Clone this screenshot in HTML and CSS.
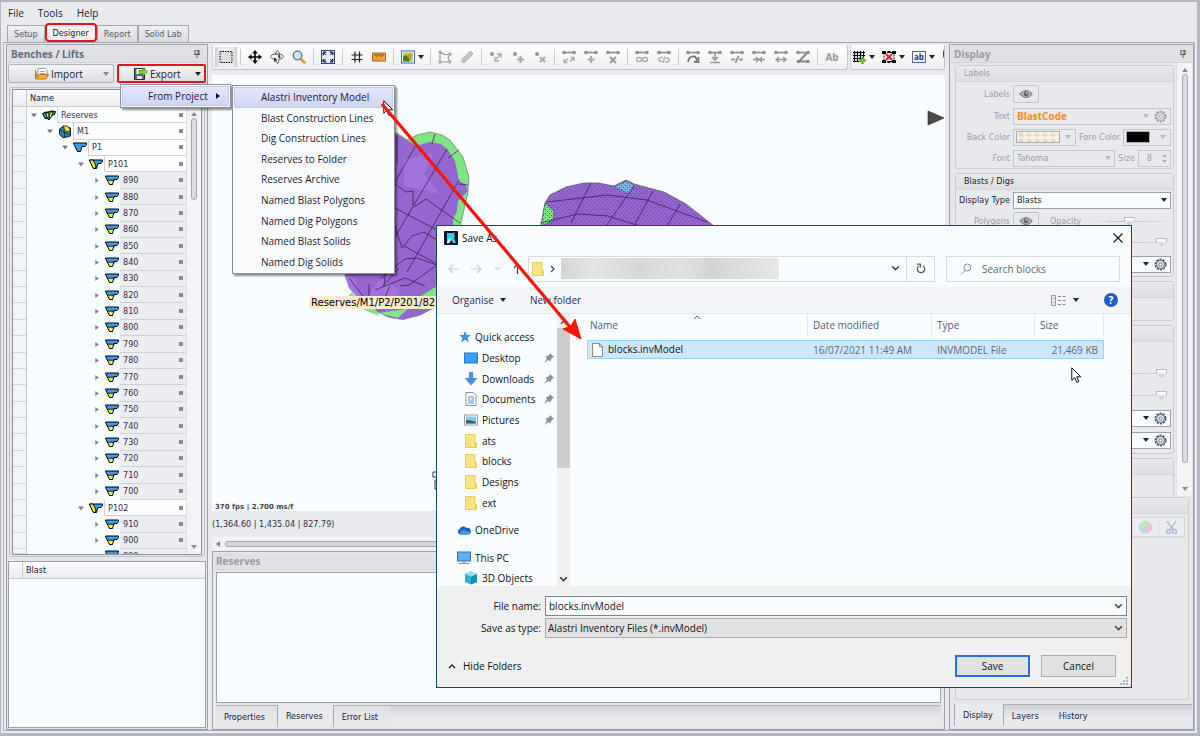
FILE: index.html
```html
<!DOCTYPE html>
<html lang="en">
<head>
<meta charset="utf-8">
<title>Designer</title>
<link rel="stylesheet" href="styles.css">
</head>
<body>
<svg class="sprite" aria-hidden="true">
  <symbol id="down" viewBox="0 0 6 4"><path d="M0 0h6L3 4z" fill="currentColor"/></symbol>
  <symbol id="right" viewBox="0 0 4 6"><path d="M0 0v6l4-3z" fill="currentColor"/></symbol>
  <symbol id="up" viewBox="0 0 6 4"><path d="M0 4h6L3 0z" fill="currentColor"/></symbol>
  <symbol id="chev" viewBox="0 0 8 6"><path d="M1 1l3 3 3-3" fill="none" stroke="currentColor" stroke-width="1.3"/></symbol>
  <symbol id="pin" viewBox="0 0 8 8"><path d="M2 0h4v4M2 0v4M5 0v4M1 4.5h6M4 5v3" fill="none" stroke="currentColor"/></symbol>
  <symbol id="bench" viewBox="0 0 14 10"><path d="M.5.500h13v1.500L12 4H9L7.500 9h-3L1 2z" fill="#3a9be8" stroke="#000"/><path d="M3 5h5L7 8.500H5z" fill="#fff01a"/><path d="M2.500 4.700h7" stroke="#000" stroke-width=".8"/></symbol>
  <symbol id="pit" viewBox="0 0 14 10"><path d="M.5.500h13v1.500L12 4H9L7.500 9h-3L1 2z" fill="#3a9be8" stroke="#000"/></symbol>
  <symbol id="stage" viewBox="0 0 14 10"><path d="M.5.500h13v1.500L12 4H9L7.500 9h-3L1 2z" fill="#3a9be8" stroke="#000"/><path d="M1 .500h3l3 6-1 2.500H4.500L1 2z" fill="#fff01a" stroke="#000" stroke-width=".9"/></symbol>
  <symbol id="reserves" viewBox="0 0 14 10"><path d="M.5 3L4 1.500 8 2l-3 6H3z" fill="#2e8fe0" stroke="#000"/><path d="M4 2.500l5-2L13.500 1l-1 3-3 1-2 4H6z" fill="#2e8fe0" stroke="#000"/><path d="M4 3l2-1 1 3-2 3zM8 2l3-1-2 6H7z" fill="#ffee10" stroke="#000" stroke-width=".7"/></symbol>
  <symbol id="model" viewBox="0 0 13 13"><path d="M1 4l4-3 3 1 4 1v8l-3 1-5 .5L1 9z" fill="#2e7fb8" stroke="#123" /><path d="M5 1l4 0 3 4-3 2-3-2z" fill="#ffe020" stroke="#222" stroke-width=".8"/><path d="M2 5l4 2v5M6 7l5 3" stroke="#0b3350" fill="none"/></symbol>
  <symbol id="gear" viewBox="0 0 14 14"><circle cx="7" cy="7" r="5.500" fill="none" stroke="currentColor" stroke-width="2" stroke-dasharray="2.300 1.150"/><circle cx="7" cy="7" r="4.300" fill="none" stroke="currentColor"/><circle cx="7" cy="7" r="1.800" fill="none" stroke="currentColor"/></symbol>
  <symbol id="eye" viewBox="0 0 14 10"><path d="M1 5q6-7 12 0q-6 7-12 0z" fill="#c4c4c6" stroke="#8a8a8a" stroke-width="1.200"/><circle cx="7" cy="4.800" r="2.500" fill="#666"/><circle cx="7.500" cy="4" r=".8" fill="#fff"/></symbol>
  <symbol id="folder" viewBox="0 0 12 14"><path d="M.5.500h9.500v8h1.500v5H.5z" fill="#f8e387" stroke="#e9cd58"/><path d="M10 8.500h1.500v5H9z" fill="#efcf4b"/></symbol>
  <symbol id="tack" viewBox="0 0 10 10"><path d="M6 0l4 4-1.500.5L7 6.500 6.500 8.500 4.500 7 0 10l3-4.500L1.500 3.500 3.500 3 5.500 1.500z" fill="#87939f"/></symbol>
  <symbol id="cursor" viewBox="0 0 11 17"><path d="M.8.800v12.500l3-2.800 2 5 2-.9-2-4.800h4z" fill="#fff" stroke="#111"/></symbol>
  <symbol id="bar" viewBox="0 0 14 14"><path d="M2 2.500h10" stroke="#8c8c8c" stroke-width="1.600"/><circle cx="2" cy="2.500" r="1.800" fill="#8c8c8c"/><circle cx="12" cy="2.500" r="1.800" fill="#8c8c8c"/></symbol>
</svg>

<div class="app">
  <nav class="menubar"><button>File</button><button>Tools</button><button>Help</button></nav>
  <div class="tabs">
    <button>Setup</button><button class="on marked">Designer</button><button>Report</button><button>Solid Lab</button>
  </div>

  <div class="work">
    <aside class="panel left">
      <h2 class="ptitle">Benches / Lifts<svg class="pin"><use href="#pin"/></svg></h2>
      <div class="io">
        <button class="iobtn">
          <svg width="14" height="12" viewBox="0 0 14 12"><path d="M3 .5h7l2 2v7H3z" fill="#fff" stroke="#8899bb"/><path d="M5 3.500h5M5 5.500h5" stroke="#9ab"/><path d="M.5 2.500v8.500h10l3-4.500H4l-2 3z" fill="#f3b13c" stroke="#b87a1c"/></svg>
          Import<svg class="caret dim"><use href="#down"/></svg></button>
        <button class="iobtn marked">
          <svg width="14" height="13" viewBox="0 0 14 13"><path d="M.5 1.500h10v11h-10z" fill="#5a6b82" stroke="#1d2a3a"/><path d="M2.500 2h6v5h-6z" fill="#fff"/><path d="M3 9h5v3H3z" fill="#dde"/><path d="M5 3.500h4V.800l4.500 4L9 9V6.500H5z" fill="#8fd33a" stroke="#3d8a12" stroke-width=".8"/></svg>
          Export<svg class="caret"><use href="#down"/></svg></button>
      </div>
      <div class="treebox">
        <div class="tree">
          <div class="thead"><span>Name</span></div>
          <ul class="rows">
            <li class="l0"><svg class="ex"><use href="#down"/></svg><svg class="ic"><use href="#reserves"/></svg><span>Reserves</span></li>
            <li class="l1"><svg class="ex"><use href="#down"/></svg><svg class="ic"><use href="#model"/></svg><span>M1</span></li>
            <li class="l2"><svg class="ex"><use href="#down"/></svg><svg class="ic"><use href="#pit"/></svg><span>P1</span></li>
            <li class="l3"><svg class="ex"><use href="#down"/></svg><svg class="ic"><use href="#stage"/></svg><span>P101</span></li>
            <li><svg class="ex"><use href="#right"/></svg><svg class="ic"><use href="#bench"/></svg><span>890</span></li>
            <li><svg class="ex"><use href="#right"/></svg><svg class="ic"><use href="#bench"/></svg><span>880</span></li>
            <li><svg class="ex"><use href="#right"/></svg><svg class="ic"><use href="#bench"/></svg><span>870</span></li>
            <li><svg class="ex"><use href="#right"/></svg><svg class="ic"><use href="#bench"/></svg><span>860</span></li>
            <li><svg class="ex"><use href="#right"/></svg><svg class="ic"><use href="#bench"/></svg><span>850</span></li>
            <li><svg class="ex"><use href="#right"/></svg><svg class="ic"><use href="#bench"/></svg><span>840</span></li>
            <li><svg class="ex"><use href="#right"/></svg><svg class="ic"><use href="#bench"/></svg><span>830</span></li>
            <li><svg class="ex"><use href="#right"/></svg><svg class="ic"><use href="#bench"/></svg><span>820</span></li>
            <li><svg class="ex"><use href="#right"/></svg><svg class="ic"><use href="#bench"/></svg><span>810</span></li>
            <li><svg class="ex"><use href="#right"/></svg><svg class="ic"><use href="#bench"/></svg><span>800</span></li>
            <li><svg class="ex"><use href="#right"/></svg><svg class="ic"><use href="#bench"/></svg><span>790</span></li>
            <li><svg class="ex"><use href="#right"/></svg><svg class="ic"><use href="#bench"/></svg><span>780</span></li>
            <li><svg class="ex"><use href="#right"/></svg><svg class="ic"><use href="#bench"/></svg><span>770</span></li>
            <li><svg class="ex"><use href="#right"/></svg><svg class="ic"><use href="#bench"/></svg><span>760</span></li>
            <li><svg class="ex"><use href="#right"/></svg><svg class="ic"><use href="#bench"/></svg><span>750</span></li>
            <li><svg class="ex"><use href="#right"/></svg><svg class="ic"><use href="#bench"/></svg><span>740</span></li>
            <li><svg class="ex"><use href="#right"/></svg><svg class="ic"><use href="#bench"/></svg><span>730</span></li>
            <li><svg class="ex"><use href="#right"/></svg><svg class="ic"><use href="#bench"/></svg><span>720</span></li>
            <li><svg class="ex"><use href="#right"/></svg><svg class="ic"><use href="#bench"/></svg><span>710</span></li>
            <li><svg class="ex"><use href="#right"/></svg><svg class="ic"><use href="#bench"/></svg><span>700</span></li>
            <li class="l3"><svg class="ex"><use href="#down"/></svg><svg class="ic"><use href="#stage"/></svg><span>P102</span></li>
            <li><svg class="ex"><use href="#right"/></svg><svg class="ic"><use href="#bench"/></svg><span>910</span></li>
            <li><svg class="ex"><use href="#right"/></svg><svg class="ic"><use href="#bench"/></svg><span>900</span></li>
            <li class="cut"><svg class="ex"></svg><svg class="ic"><use href="#bench"/></svg><span>890</span></li>
          </ul>
          <div class="vscroll"><svg class="ar"><use href="#up"/></svg><i class="short"></i><svg class="ar"><use href="#down"/></svg></div>
        </div>
      </div>
      <div class="blast"><div class="thead"><span>Blast</span></div></div>
    </aside>

    <main class="center">
      <div class="bars">
        <div class="bar">
          <button class="pressed" aria-label="Select"><svg viewBox="0 0 14 14"><rect x="1" y="1.500" width="12" height="11" fill="#ddd" stroke="#000" stroke-dasharray="1.500 1"/></svg></button><hr>
          <button aria-label="Pan"><svg viewBox="0 0 14 14"><path d="M7 2v10M2 7h10" stroke="#000" stroke-width="1.600"/><path d="M7 0l2.800 3.500H4.200zM7 14l2.800-3.500H4.200zM0 7l3.500-2.800v5.600zM14 7l-3.500-2.800v5.600z"/></svg></button>
          <button aria-label="Rotate"><svg viewBox="0 0 14 14"><path d="M5 9.500Q.500 8.500.500 6.500 1 4 7 4t6.500 2.500Q13.500 8 10 9M5.500 5Q5.500.500 7.500.500 9.500 1 9.500 6t-2 7.500Q6 13 5.500 10" fill="none" stroke="#555"/><path d="M4 7.500l3.500 2-3.500 2.500zM8.500 4.500l2.500 2.500-3 .500z" fill="#333"/></svg></button>
          <button aria-label="Zoom"><svg viewBox="0 0 14 14"><path d="M8.500 8.500l4 4" stroke="#e0a030" stroke-width="2.600" stroke-linecap="round"/><circle cx="5.500" cy="5.500" r="4.300" fill="#cfe6f8" stroke="#5a6f88" stroke-width="1.300"/></svg></button><hr>
          <button aria-label="Fit"><svg viewBox="0 0 14 14"><rect x=".5" y=".5" width="13" height="13" fill="#e6ecfa" stroke="#36436e"/><path d="M2 2h3.500L2 5.500zM12 2v3.500L8.500 2zM2 12V8.500L5.500 12zM12 12H8.500L12 8.500zM3 3l8 8M11 3l-8 8" fill="#26335e" stroke="#26335e" stroke-dasharray="3 5.300"/></svg></button><hr>
          <button aria-label="Grid"><svg viewBox="0 0 14 14"><path d="M5 1.500v11M9.500 1.500v11M1.500 5h11M1.500 9.500h11" stroke="#222" stroke-width="1.200"/></svg></button>
          <button aria-label="Ruler"><svg viewBox="0 0 14 14"><rect x=".5" y="3" width="13" height="8" fill="#e8a33a" stroke="#b06a14"/><path d="M3 4v2M5 4v3M7 4v2M9 4v3M11 4v2" stroke="#70420a" stroke-width=".8"/></svg></button><hr>
          <button class="wide" aria-label="Image"><svg viewBox="0 0 14 14"><rect x=".5" y="1" width="13" height="12" fill="#fff" stroke="#3f5fa0"/><path d="M2 2.500h10v9H2z" fill="#a8cf5a"/><path d="M2 11.500V7l3-2 3 2.500 1 4z" fill="#3e7d28"/><circle cx="8.500" cy="6" r="2.200" fill="#e88a20"/></svg><svg class="caret"><use href="#down"/></svg></button><hr>
          <button aria-label="Polygon"><svg viewBox="0 0 14 14"><path d="M2 2l4 2.500h6L10 8l2 4H2z" fill="none" stroke="#999" stroke-width="1.100"/><path d="M1 1h2v2H1zM1 11h2v2H1zM11 11h2v2h-2zM11 3h2v2h-2z" fill="#fff" stroke="#999"/></svg></button>
          <button aria-label="Edit"><svg viewBox="0 0 14 14"><path d="M2 12V9.500L9.500 2q2-1 3 1 .5 1-.5 2L5 12q-2 1-3 0z" fill="#c4c4c4" stroke="#aaa"/></svg></button><hr>
          <button aria-label="Move point"><svg viewBox="0 0 14 14"><circle cx="3" cy="4" r="2" fill="#999"/><path d="M7 9l4-4M8 4h4v4M6 7v4h4" fill="none" stroke="#aaa" stroke-width="1.400"/></svg></button>
          <button aria-label="Add point"><svg viewBox="0 0 14 14"><circle cx="4" cy="4" r="2" fill="#999"/><path d="M9.500 6v7M6 9.500h7" stroke="#aaa" stroke-width="2.200"/></svg></button>
          <button aria-label="Delete point"><svg viewBox="0 0 14 14"><circle cx="4" cy="4" r="2" fill="#999"/><path d="M7 7l5 5M12 7l-5 5" stroke="#aaa" stroke-width="2"/></svg></button><hr>
          <button aria-label="Move edge"><svg viewBox="0 0 14 14"><use href="#bar"/><path d="M2 9v3.500h3.500M2 12.500l4-4M12 11V7.500H8.500M12 7.500l-4 4" fill="none" stroke="#aaa" stroke-width="1.300"/></svg></button>
          <button aria-label="Add edge"><svg viewBox="0 0 14 14"><use href="#bar"/><path d="M7 6v7M3.500 9.500h7" stroke="#aaa" stroke-width="2.200"/></svg></button>
          <button aria-label="Delete edge"><svg viewBox="0 0 14 14"><use href="#bar"/><path d="M4 7l6 6M10 7l-6 6" stroke="#999" stroke-width="1.800"/></svg></button><hr>
          <button aria-label="Link"><svg viewBox="0 0 14 14"><use href="#bar"/><rect x="1.500" y="7.500" width="5" height="4" rx="2" fill="none" stroke="#aaa" stroke-width="1.400"/><rect x="7.500" y="7.500" width="5" height="4" rx="2" fill="none" stroke="#aaa" stroke-width="1.400"/></svg></button>
          <button aria-label="Unlink"><svg viewBox="0 0 14 14"><use href="#bar"/><path d="M6 7.500H4q-2 0-2 2t2 2h1M8 12h2q2 0 2-2t-2-2H9M8 6.500L6 13" fill="none" stroke="#aaa" stroke-width="1.400"/></svg></button><hr>
          <button aria-label="Arc"><svg viewBox="0 0 14 14"><use href="#bar"/><path d="M2 12q1-6 6-5.500 2 0 3 4M12.500 7v5H8" fill="none" stroke="#777" stroke-width="1.800"/></svg></button>
          <button aria-label="Insert"><svg viewBox="0 0 14 14"><use href="#bar"/><path d="M7 3v6M4 7l3 3 3-3M2 12.500h10" fill="none" stroke="#999" stroke-width="1.700"/></svg></button>
          <button aria-label="Split"><svg viewBox="0 0 14 14"><use href="#bar"/><path d="M1 9.500h4M9 9.500h4M8.500 6l-3 7" fill="none" stroke="#999" stroke-width="1.900"/></svg></button>
          <button aria-label="Join"><svg viewBox="0 0 14 14"><use href="#bar"/><path d="M1 9.500h12M4 7l2.500 2.500L4 12M10 7L7.500 9.500 10 12" fill="none" stroke="#999" stroke-width="1.600"/></svg></button>
          <button aria-label="Extend"><svg viewBox="0 0 14 14"><use href="#bar"/><path d="M2 9.500h10M5 7L2 9.500 5 12M9 7l3 2.500L9 12" fill="none" stroke="#999" stroke-width="1.600"/></svg></button>
          <button aria-label="Zigzag"><svg viewBox="0 0 14 14"><use href="#bar"/><path d="M11 3L3 11.500h9" fill="none" stroke="#888" stroke-width="2"/><circle cx="2.500" cy="11.500" r="1.800" fill="#888"/><circle cx="12" cy="11.500" r="1.800" fill="#888"/></svg></button><hr>
          <button class="abc" aria-label="Text"><span>Ab</span></button>
        </div>
        <div class="bar two">
          <button class="wide" aria-label="Add grid"><svg viewBox="0 0 14 14"><path d="M2.500 1v11M5.500 1v11M8.500 1v11M11.500 1v8M1 2.500h12M1 5.500h12M1 8.500h9M1 11.500h7" stroke="#000" stroke-width="1.200"/><path d="M10.500 7v7M7 10.500h7" stroke="#6ab82c" stroke-width="2.600"/></svg><svg class="caret"><use href="#down"/></svg></button>
          <button class="wide" aria-label="Clear shape"><svg viewBox="0 0 14 14"><rect x="2" y="2.500" width="10" height="9" fill="#fff" stroke="#000" stroke-dasharray="2 1"/><path d="M0 1h4v3H0zM10 1h4v3h-4zM0 10h4v3H0zM10 10h4v3h-4zM5.500 1h3v2h-3zM5.500 11h3v2h-3z"/><path d="M4 4l6 6M10 4l-6 6" stroke="#e2223a" stroke-width="2.200"/></svg><svg class="caret"><use href="#down"/></svg></button>
          <button class="wide" aria-label="Label"><span class="ab">ab</span><svg class="caret"><use href="#down"/></svg></button>
          <button class="half" aria-label="Label layout"><svg viewBox="0 0 14 14"><rect x=".5" y="1" width="11" height="6" fill="#aab4dc" stroke="#3a4a90"/><path d="M2 10h9M4 8v6" stroke="#000" stroke-width="1.500"/></svg></button>
        </div>
      </div>

      <div class="canvas">
        <svg class="scene" width="736" height="436" viewBox="212 75 736 436" aria-hidden="true">
          <defs><pattern id="dots" width="4" height="4" patternUnits="userSpaceOnUse"><rect x="1" y="1" width="1" height="1" fill="#5a3f92"/><rect x="3" y="3" width="1" height="1" fill="#6b4aa8"/></pattern></defs>
          <path d="M380 133h17l10 7 10-5 13-3 12 3 8 5 13 17 6 20-1 15-7 31 -10 60-4 18-15 8-15 7-17 2-12-1-18-9-17-16-8-20-4-20z" fill="#7fe582" stroke="#6b7a6b" stroke-width=".7"/>
          <path d="M380 140l17-6 10 6 9 6 14-4 11 2 6 5 8 12 4 20 6 3 3 7-6 6-4 4-1 10-4 8-2 76-16 12-14 8-18 5-12-2-14-6-13-9-10-12-8-14-4-20z" fill="#9565d0"/>
          <path d="M344 274l12 4 3 14 12 14-10-4-12-14zM404 160l30-8-10 22 16 20-36-8zM366 300l14-22 20 12-8 14z" fill="#a273dc"/>
          <path d="M346 298l6-6 5 7-4 5zM421 296l16-10v12l-13 4zM378 313l20-3 10-1-10 9zM359 307l14-3 6 12-10-4z" fill="#7fe582"/>
          <path d="M397 163v-27M416 145l-21 37M447 149l-52 88M459 180l-52 92M395 184l11 8 7-1v14M414 207l12-8 34 24M395 208l42 22M395 226l7 22 10-12 12-4 13 8M380 279l25-20 12-1 20 7M375 290l30-12 20 8M384 286l2-22M404 246l33 18M435 134l-3 10M459 150l-11 8M468 185l-9-1M369 284v20l-20-26M383 286l16-18M400 286l9-1 28-20M390 286l-10 22" fill="none" stroke="#2c1545" stroke-width=".7"/>
          <path d="M541 226l4-23 5-8 16-8 18-4h14l16 3 12-6 8 4 30 8 22 12 28 22z" fill="#9565d0" stroke="#555" stroke-width=".7"/>
          <path d="M541 226l4-23 9 8-1 10-10 4z" fill="#7fe582" stroke="#456" stroke-width=".7"/>
          <path d="M614 187l12-6 8 4-4 9z" fill="#7bb4e6" stroke="#567" stroke-width=".7"/>
          <path d="M541 226l4-23 5-8 16-8 18-4h14l16 3 12-6 8 4 30 8 22 12 28 22z" fill="url(#dots)"/>
          <path d="M547 202l60-7 40 5 60 22M540 223l38-9 30 2 32 10M591 183l-20 40M634 186l-28 40M653 191l-18 33M680 204l-13 22" fill="none" stroke="#2c1545" stroke-width=".7"/>
          <rect x="309" y="296" width="128" height="13" fill="#fde9cc"/>
          <text x="311" y="306" class="tip">Reserves/M1/P2/P201/82</text>
          <path d="M928 111l16 7-16 7z" fill="#4a4a4a" stroke="#222" stroke-width=".6"/>
          <path d="M436 472h-3v5h3M437 480h-2v9h2" fill="none" stroke="#333"/>
          <text x="215" y="509" class="fps">370 fps | 2.700 ms/f</text>
        </svg>
      </div>
      <div class="status">(1,364.60 | 1,435.04 | 827.79)</div>
      <div class="hscroll"><svg class="left-ar" viewBox="0 0 4 6"><path d="M4 0v6L0 3z" fill="#777b88"/></svg><i></i></div>
      <section class="panel reserves">
        <h2 class="ptitle dim">Reserves</h2>
        <div class="sheet"></div>
        <div class="btabs"><button>Properties</button><button class="on">Reserves</button><button>Error List</button></div>
      </section>
    </main>

    <aside class="panel right">
      <h2 class="ptitle dim">Display<svg class="pin"><use href="#pin"/></svg></h2>
      <div class="props">
        <div class="groups">
          <fieldset class="group off">
            <h3>Labels</h3>
            <div class="row r24"><label>Labels</label><button class="eye" aria-label="Labels"><svg><use href="#eye"/></svg></button></div>
            <div class="row r20"><label for="txt">Text</label><div class="combo grow"><select id="txt" class="orange"><option>BlastCode</option></select><svg class="caret"><use href="#down"/></svg><svg class="gear"><use href="#gear"/></svg></div></div>
            <div class="row r22"><label>Back Color</label><button class="combo color" aria-label="Back Color"><i class="beige"></i><svg class="caret"><use href="#down"/></svg></button><span class="lab2">Fore Color</span><button class="combo color fore" aria-label="Fore Color"><i class="black"></i><svg class="caret"><use href="#down"/></svg></button></div>
            <div class="row r20"><label for="fnt">Font</label><div class="combo fnt"><select id="fnt"><option>Tahoma</option></select><svg class="caret"><use href="#down"/></svg></div><label class="lab2" for="sz">Size</label><div class="combo size"><input id="sz" value="8"><span class="spin"><svg><use href="#up"/></svg><svg><use href="#down"/></svg></span></div></div>
          </fieldset>
          <fieldset class="group g2">
            <h3>Blasts / Digs</h3>
            <div class="row r20"><label for="dt">Display Type</label><div class="combo grow white"><select id="dt"><option>Blasts</option></select><svg class="caret"><use href="#down"/></svg></div></div>
            <div class="row r22 off"><label>Polygons</label><button class="eye" aria-label="Polygons"><svg><use href="#eye"/></svg></button><label class="op" for="op">Opacity</label><input id="op" class="opr" type="range" value="50"></div>
            <div class="row r20 off"><input class="end" type="range" value="100" aria-label="Solid opacity"></div>
            <div class="row r24"><div class="combo grow white"><select aria-label="Blast colour"><option></option></select><svg class="caret"><use href="#down"/></svg><svg class="gear"><use href="#gear"/></svg></div></div>
          </fieldset>
          <fieldset class="group g3"><h3></h3></fieldset>
          <fieldset class="group g4"><h3></h3><div class="row r20"></div>
            <div class="row r22 off"><input class="end" type="range" value="100" aria-label="Line opacity"></div>
            <div class="row r22 off"><input class="end" type="range" value="100" aria-label="Fill opacity"></div>
            <div class="row r24"><div class="combo grow white"><select aria-label="Line colour"><option></option></select><svg class="caret"><use href="#down"/></svg><svg class="gear"><use href="#gear"/></svg></div></div>
            <div class="row r20"><div class="combo grow white"><select aria-label="Fill colour"><option></option></select><svg class="caret"><use href="#down"/></svg><svg class="gear"><use href="#gear"/></svg></div></div>
          </fieldset>
          <fieldset class="group last"><h3></h3></fieldset>
        </div>
        <div class="vscroll"><svg class="ar"><use href="#up"/></svg><i class="long"></i><svg class="ar"><use href="#down"/></svg></div>
      </div>
      <fieldset class="group lower"><h3></h3>
        <div class="well"><div class="welltools">
          <button aria-label="Colours"><svg width="13" height="13" viewBox="0 0 13 13"><circle cx="6.500" cy="6.500" r="6" fill="#f6c0d6"/><path d="M6.500 6.500L1 3.500A6 6 0 0 1 11 2.500z" fill="#b9f0b0"/><path d="M6.500 6.500L1 3.500A6 6 0 0 0 5 12.300z" fill="#a9e4f2"/><circle cx="6.500" cy="6.500" r="6" fill="none" stroke="#d5c8d8"/></svg></button>
          <button aria-label="Cut"><svg width="13" height="13" viewBox="0 0 13 13"><path d="M2 0l6 9M11 0L5 9" stroke="#b9bfca" stroke-width="1.600"/><circle cx="3.500" cy="10.500" r="2" fill="none" stroke="#a9b9da" stroke-width="1.500"/><circle cx="9.500" cy="10.500" r="2" fill="none" stroke="#a9b9da" stroke-width="1.500"/></svg></button>
        </div></div>
      </fieldset>
      <div class="btabs"><button class="on">Display</button><button class="plain">Layers</button><button class="plain">History</button></div>
    </aside>
  </div>

  <div class="popup from"><button class="hot">From Project<svg><use href="#right"/></svg></button></div>
  <div class="popup list">
    <button class="hot">Alastri Inventory Model</button><button>Blast Construction Lines</button><button>Dig Construction Lines</button><button>Reserves to Folder</button><button>Reserves Archive</button><button>Named Blast Polygons</button><button>Named Dig Polygons</button><button>Named Blast Solids</button><button>Named Dig Solids</button>
  </div>

  <div class="dialog" role="dialog" aria-label="Save As">
    <div class="dtitle">
      <svg width="14" height="14" viewBox="0 0 14 14"><rect width="14" height="14" rx="1" fill="#0b1230"/><path d="M3 2h5a3 3 0 0 1 2 5l2 5H9L7 8.500 5 12H3z" fill="#2fd6dc"/><path d="M3 12l2-4 2 .5L5 12zM9 2.500l2-1" fill="#bff" stroke="#dff" stroke-width=".6"/></svg>
      <span>Save As</span><button aria-label="Close"><svg width="10" height="10" viewBox="0 0 10 10"><path d="M.5.500l9 9M9.500.500l-9 9" stroke="#111" stroke-width="1.100"/></svg></button>
    </div>
    <div class="dnav">
      <div class="arrows">
        <svg width="11" height="10" viewBox="0 0 11 10"><path d="M5 1L1 5l4 4M1 5h10" fill="none" stroke="#ccc" stroke-width="1.200"/></svg>
        <svg width="11" height="10" viewBox="0 0 11 10"><path d="M6 1l4 4-4 4M10 5H0" fill="none" stroke="#ccc" stroke-width="1.200"/></svg>
        <svg width="7" height="5" viewBox="0 0 8 6" color="#ccc"><use href="#chev"/></svg>
        <svg width="9" height="11" viewBox="0 0 9 11"><path d="M1 5l3.500-4L8 5M4.500 1v10" fill="none" stroke="#444" stroke-width="1.300"/></svg>
      </div>
      <div class="addr"><svg width="12" height="14"><use href="#folder"/></svg><svg width="5" height="8" viewBox="0 0 5 8"><path d="M1 1l3 3-3 3" fill="none" stroke="#444" stroke-width="1.200"/></svg><i></i><svg class="ddown" width="9" height="7" color="#444"><use href="#chev"/></svg><button aria-label="Refresh"><svg width="10" height="11" viewBox="0 0 10 11"><path d="M7 2.800A3.700 3.700 0 1 1 2.500 3.200M1 1.200h3.300v3.300" fill="none" stroke="#555" stroke-width="1.300"/></svg></button></div>
      <div class="search"><svg width="12" height="12" viewBox="0 0 12 12"><circle cx="7.300" cy="4.500" r="3.500" fill="none" stroke="#888"/><path d="M5 7.500L1 11.500" stroke="#888"/></svg><input aria-label="Search" placeholder="Search blocks"></div>
    </div>
    <div class="dtools"><button>Organise<svg class="caret"><use href="#down"/></svg></button><button class="nf">New folder</button>
      <button class="view" aria-label="View"><svg width="15" height="11" viewBox="0 0 15 11"><path d="M.5.500h4v10h-4z" fill="#eee" stroke="#999"/><path d="M7 1.500h3M11.500 1.500h3M7 5.500h3M11.500 5.500h3M7 9.500h3M11.500 9.500h3" stroke="#888"/><path d="M1.500 3.500h2M1.500 7.500h2" stroke="#8ab"/></svg><svg class="caret"><use href="#down"/></svg></button>
      <button class="help" aria-label="Help">?</button></div>
    <div class="dmain">
      <div class="side">
        <ul class="quick">
          <li class="top"><svg viewBox="0 0 12 12"><path d="M6 0l1.700 4H12L8.500 6.800 10 11.500 6 8.800 2 11.500l1.500-4.700L0 4h4.300z" fill="#3d8fe0"/></svg>Quick access</li>
          <li><svg viewBox="0 0 14 12"><rect x=".5" y="1" width="13" height="10" fill="#3ba0ff" stroke="#2b78c4"/></svg>Desktop<svg class="tack"><use href="#tack"/></svg></li>
          <li><svg viewBox="0 0 14 14"><path d="M5 0h4v6h4.500L7 13.500.500 6H5z" fill="#4a90e0"/></svg>Downloads<svg class="tack"><use href="#tack"/></svg></li>
          <li><svg viewBox="0 0 14 14"><path d="M2 .500h7.500l2.500 2.500v10.500H2z" fill="#fff" stroke="#8a9299"/><path d="M4 5h6M4 7h2.500M4 9h6M4 11h6M7.500 7h2.500" stroke="#4a8fc8"/></svg>Documents<svg class="tack"><use href="#tack"/></svg></li>
          <li><svg viewBox="0 0 14 12"><rect x=".5" y="1" width="13" height="10" fill="#fff" stroke="#9a9a9a"/><path d="M2 2.500h10v7H2z" fill="#8cc4ee"/><path d="M2 9.500V6q5 0 10 2v1.500z" fill="#2d6076"/></svg>Pictures<svg class="tack"><use href="#tack"/></svg></li>
          <li><svg><use href="#folder"/></svg>ats</li>
          <li><svg><use href="#folder"/></svg>blocks</li>
          <li><svg><use href="#folder"/></svg>Designs</li>
          <li><svg><use href="#folder"/></svg>ext</li>
        </ul>
        <ul class="places">
          <li class="top"><svg viewBox="0 0 14 10"><path d="M3 9.500a3 3 0 0 1-.5-5.500A4 4 0 0 1 9.500 3 3.300 3.300 0 0 1 11.500 9.500z" fill="#2563c0"/><path d="M3 9.500q-1-3 2-4 3-1 5 1 4-1 3.500 2 0 1-2 1z" fill="#3f9bea"/></svg>OneDrive</li>
          <li class="top gap"><svg viewBox="0 0 14 13"><rect x=".5" y=".5" width="13" height="9" fill="#5ab2f8" stroke="#3a6f9e"/><path d="M2 12h10M5 10.500h4" stroke="#889"/></svg>This PC</li>
          <li><svg viewBox="0 0 14 14"><path d="M1 3l6-2.500L13 3v8l-6 2.500L1 11z" fill="#2cb0cc"/><path d="M7 5.500L13 3v8l-6 2.500z" fill="#1890b8"/><path d="M1 3l6-2.500L13 3 7 5.500z" fill="#8fe6ee"/></svg>3D Objects</li>
        </ul>
      </div>
      <div class="sscroll"><svg width="7" height="6" viewBox="0 0 8 6"><path d="M1 5l3-3 3 3" fill="none" stroke="#444" stroke-width="1.300"/></svg><i></i><svg width="9" height="7" color="#333"><use href="#chev"/></svg></div>
      <div class="files">
        <svg class="sort" width="8" height="5" viewBox="0 0 8 5"><path d="M1 4l3-3 3 3" fill="none" stroke="#666"/></svg>
        <table>
          <colgroup><col><col class="c2"><col class="c3"><col class="c4"></colgroup>
          <thead><tr><th>Name</th><th>Date modified</th><th>Type</th><th>Size</th></tr></thead>
          <tbody><tr><td><svg width="11" height="14" viewBox="0 0 11 14"><path d="M.5.500h7l3 3v10H.5z" fill="#fff" stroke="#888"/><path d="M7.500.500v3h3" fill="none" stroke="#888"/></svg>blocks.invModel</td><td>16/07/2021 11:49 AM</td><td>INVMODEL File</td><td class="num">21,469 KB</td></tr></tbody>
        </table>
      </div>
    </div>
    <div class="dfoot">
      <div class="field"><label for="fname">File name:</label><div class="fbox"><input id="fname" value="blocks.invModel"><svg width="9" height="7" color="#444"><use href="#chev"/></svg></div></div>
      <div class="field"><label for="ftype">Save as type:</label><div class="fbox grey"><select id="ftype"><option>Alastri Inventory Files (*.invModel)</option></select><svg width="9" height="7" color="#444"><use href="#chev"/></svg></div></div>
      <div class="acts"><button class="hide"><svg width="8" height="6" viewBox="0 0 8 6"><path d="M1 5l3-3 3 3" fill="none" stroke="#222" stroke-width="1.400"/></svg>Hide Folders</button><button class="btn def">Save</button><button class="btn">Cancel</button></div>
    </div>
    <svg class="grip" width="8" height="8" viewBox="0 0 8 8"><path d="M6 0h2v2H6zM3 3h2v2H3zM6 3h2v2H6zM0 6h2v2H0zM3 6h2v2H3zM6 6h2v2H6z" fill="#b4b4b4"/></svg>
  </div>

  <svg class="notes" width="1200" height="736" viewBox="0 0 1200 736" aria-hidden="true">
    <use href="#cursor" x="383" y="100" width="11" height="17"/>
    <use href="#cursor" x="1071" y="367" width="11" height="17"/>
    <path d="M382 104L570 327" stroke="#fb1408" stroke-width="3.200"/>
    <path d="M581 339l-18-10 8-3 4-7z" fill="#fb1408" stroke="#fb1408"/>
  </svg>
</div>
</body>
</html>
```
FILE: styles.css
```css
* { box-sizing: border-box; }
body { margin: 0; background: #c3c5cd; color: #1d1b33; font: 10px/14px "Open Sans", "Noto Sans", sans-serif; }
button, input, select { font: inherit; color: inherit; margin: 0; padding: 0; border: 0; background: none; border-radius: 0; }
button { white-space: nowrap; }
select { appearance: none; opacity: 1; }
input:focus, select:focus { outline: none; }
ul, h2, h3, fieldset { margin: 0; padding: 0; border: 0; min-width: 0; list-style: none; }
svg { flex: none; display: block; }
.sprite { position: absolute; width: 0; height: 0; }
.caret { width: 6px; height: 4px; color: #222; }
.caret.dim { color: #888b96; }
.marked { border: 2px solid #e8141a !important; border-radius: 4px; }
.tabs, .tree, .blast, .status, .btabs, .props { font-family: "DejaVu Sans Condensed", "DejaVu Sans", sans-serif; font-size: 9px; }

.app { position: relative; min-height: 100vh; display: flex; flex-direction: column; padding: 3px 2px 2px; background: #e9eaee; border: 1px solid #b4b7c0; border-top-width: 2px; border-bottom-width: 3px; border-right-width: 3px; overflow: hidden; }
.menubar { display: flex; gap: 14px; padding-left: 5px; }
.menubar button { height: 15px; }
.tabs { display: flex; align-items: flex-end; height: 23px; padding-left: 4px; border-bottom: 1px solid #a0a3ae; }
.tabs button { height: 17px; padding: 0 6px; border: 1px solid #a5a8b2; border-bottom: 0; background: linear-gradient(#eeeff2, #d9dade); color: #5a5a6c; }
.tabs .on { height: 19px; background: #f0f1f4; color: #1d1b33; }
.work { flex: 1; display: grid; grid-template-columns: 202px minmax(0, 1fr) 245px; gap: 4px; padding: 1px 0 0 2px; border-left: 1px solid #b5b8c1; border-bottom: 1px solid #a5a8b2; border-right: 1px solid #b5b8c1; }
.panel { display: flex; flex-direction: column; border: 1px solid #9da0ab; background: #e6e7ea; padding: 1px; min-height: 0; }
.ptitle { display: flex; align-items: center; justify-content: space-between; height: 17px; padding: 0 5px 0 3px; background: #dfe0e4; border-bottom: 1px solid #d2d3d9; font-size: 10px; font-weight: 700; color: #666a7c; }
.ptitle.dim { color: #9a9ca8; }
.pin { width: 8px; height: 8px; color: #555; }

/* benches panel */
.io { display: grid; grid-template-columns: 106fr 89fr; gap: 3px; padding: 1px 0; }
.iobtn { height: 19px; display: flex; align-items: center; gap: 2px; padding: 0 4px 0 26px; border: 1px solid #b3b5be; border-radius: 2px; background: linear-gradient(#f5f5f7, #dcdde1); }
.iobtn.marked { padding: 0 3px 0 15px; }
.iobtn .caret { margin-left: auto; }
.treebox { flex: 1; display: flex; margin: 3px 1px 4px; padding: 1px 2px; border: 1px solid #c0c2ca; border-radius: 3px; }
.tree { flex: 1; display: grid; grid-template: 17px 1fr / 1fr 15px; border: 1px solid #8f929d; background: #fafdff; }
.thead { grid-column: 1 / -1; display: flex; height: 17px; background: linear-gradient(#fbfbfc, #ececef); border-bottom: 1px solid #c8cad1; }
.thead span { margin-left: 13px; padding: 1px 0 0 3px; border-left: 1px solid #c8cad1; }
.rows { display: grid; grid-template-rows: repeat(27, minmax(16px, 1fr)) 5px; }
.rows li { display: flex; align-items: center; min-height: 0; padding-left: 81px; background: linear-gradient(#d5d6dd, #d5d6dd) 0 100% / 13px 1px no-repeat, linear-gradient(90deg, #f3f4f6 13px, #c8cad1 13px, #c8cad1 14px, transparent 14px); }
.rows .l0 { padding-left: 18px; } .rows .l1 { padding-left: 34px; } .rows .l2 { padding-left: 49px; } .rows .l3 { padding-left: 65px; }
.rows .ex { width: 6px; height: 5px; color: #7c7c86; }
.rows .ic { width: 14px; height: 11px; margin: 0 1px 0 5px; }
.rows .l1 .ic { height: 13px; }
.rows span { flex: 1; align-self: stretch; display: flex; align-items: center; padding-left: 3px; border-bottom: 1px solid #d0d1d8; background: #ecedf0; color: #333044; }
.rows span::after { content: ""; width: 4px; height: 4px; margin: 0 3px 0 auto; background: #8a8a90; }
.rows [class^="l"] span { background: #fbfdff; border-left: 1px solid #d0d1d8; }
.rows .cut { overflow: hidden; align-items: flex-start; }
.rows .cut .ic { margin-top: 1px; }
.rows .cut span { overflow: hidden; align-items: flex-start; border: 0; }
.rows .cut span::after { height: 0; }
.vscroll { display: flex; flex-direction: column; align-items: center; padding: 5px 0; background: #f4f4f7; border-left: 1px solid #dfe0e5; }
.vscroll .ar { width: 6px; height: 4px; color: #888b95; margin-bottom: 2px; }
.vscroll .ar:last-child { margin: auto 0 0; }
.vscroll i { width: 6px; border: 1px solid #a3a6b0; border-radius: 3px; background: #dcdde2; }
.short { height: 82px; } .vscroll .long { flex: 1; margin-bottom: 24px; }
.blast { height: 167px; border: 1px solid #9da0ab; background: #fafdff; }

/* viewport */
.center { display: flex; flex-direction: column; min-width: 0; }
.bars { display: flex; height: 31px; gap: 2px; padding-bottom: 5px; }
.bar { display: flex; align-items: center; flex: none; padding: 0 4px 0 2px; border: 1px solid #c3c5cd; border-top-color: #eee; border-left-color: #d5d6dd; border-radius: 3px; background: linear-gradient(#fdfdfe, #f0f0f3); }
.bar.two { flex: 1; min-width: 0; overflow: hidden; padding: 0; }
.bar button { display: flex; align-items: center; justify-content: center; width: 22px; height: 20px; flex: none; }
.bar button > svg:not(.caret) { width: 14px; height: 14px; }
.bar .pressed { background: linear-gradient(90deg, #c9cacf, #ececef 20%, #ececef 80%, #c9cacf); }
.bar .wide { width: 30px; gap: 3px; }
.bar.two .wide { justify-content: flex-start; padding-left: 1px; }
.bar hr { width: 1px; height: 16px; margin: 0 3px; border: 0; background: #c8cad1; }
.bar .half { justify-content: flex-start; padding-left: 2px; width: 14px; }
.abc { color: #9a9a9a; font-weight: 700; }
.ab { border: 1px solid #4c64a8; padding: 0 1px; line-height: 10px; font-size: 8px; font-weight: 700; color: #25386e; }
.canvas { flex: 1; background: #fafdff; position: relative; min-height: 300px; }
.scene { position: absolute; top: 0; left: 0; }
.tip { font: 10px "DejaVu Sans", sans-serif; }
.fps { font: bold 7px "DejaVu Sans", sans-serif; fill: #444; }
.status { height: 26px; line-height: 26px; color: #333044; }
.hscroll { display: flex; align-items: center; height: 14px; background: #f2f2f5; padding-left: 4px; gap: 5px; }
.left-ar { width: 4px; height: 6px; }
.hscroll i { flex: 1; height: 6px; border: 1px solid #a3a6b0; border-radius: 3px; background: #d5d6db; }
.reserves { height: 179px; padding: 1px 3px 0; }
.reserves .ptitle { margin: 0 -2px 2px; padding-left: 2px; }
.sheet { flex: 1; border: 1px solid #a0a3ae; background: #fafdff; }
.btabs { display: flex; height: 22px; margin: 2px 0; background: linear-gradient(#d2d3d9, #e9eaee 60%); border-top: 1px solid #aeb0ba; }
.btabs button { padding: 0 12px 0 8px; background: linear-gradient(#e1e2e6, #e9eaee); }
.btabs .on { padding-right: 10px; background: #e9eaee; border: solid #a5a8b2; border-width: 0 1px; margin-top: -1px; }
.btabs .plain { background: none; }

/* display panel */
.right .props { flex: 1; display: flex; min-height: 0; padding-left: 4px; margin-bottom: 1px; }
.groups { flex: 1; display: flex; flex-direction: column; gap: 4px; padding: 2px 2px 0 0; overflow: hidden; }
.right .vscroll { width: 16px; }
.group { border: 1px solid #c9cbd2; border-radius: 3px; background: #e8e9ec; padding-right: 2px; }
.group h3 { height: 16px; margin-right: -2px; padding-left: 8px; border-bottom: 1px solid #d5d6dc; background: linear-gradient(#e8e9ec, #dddee2); font-size: 9px; font-weight: 400; line-height: 15px; }
.off { color: #9a9ca8; }
.off .caret { color: #b4b6be; }
.off .gear { color: #9c9ea8; }
.row { display: flex; align-items: center; gap: 3px; }
.row > label:first-child { width: 54px; text-align: right; white-space: nowrap; }
.r20 { height: 20px; } .r22 { height: 22px; } .r24 { height: 24px; }
.eye { width: 26px; height: 18px; display: flex; align-items: center; justify-content: center; border: 1px solid #c3c5cc; border-radius: 2px; }
.eye svg { width: 14px; height: 10px; }
.combo { display: flex; align-items: center; height: 17px; padding: 0 3px; border: 1px solid #c3c5cc; gap: 5px; min-width: 0; }
.combo select, .combo input { flex: 1; min-width: 0; }
.grow { flex: 1; }
.white { background: #fafdff; border-color: #9da0ab; }
.white .gear { color: #4a557c; }
.orange { color: #f58c14; font: 700 10px "Open Sans", sans-serif; }
.gear { width: 13px; height: 13px; }
.color { width: 63px; justify-content: space-between; padding: 0 4px 0 2px; }
.color i { width: 44px; height: 12px; border: 1px solid #aaa; }
.color .beige { background: radial-gradient(#dcdcd2 2px, #fbeedd 3px) 0 0 / 8px 6px; }
.color.fore { width: auto; flex: 1; }
.color .black { width: 24px; background: #000; }
.lab2 { white-space: nowrap; }
.fnt { width: 102px; }
.size { flex: 1; }
.size input { padding-left: 5px; }
.spin { display: grid; gap: 3px; color: #aaa; }
.spin svg { width: 5px; height: 3px; }
.op { margin-left: 8px; }
input[type="range"] { appearance: none; height: 12px; background: linear-gradient(90deg, #e8e9ec, #cdb3e0 40%, #e0d5e8) center / 100% 1px no-repeat; }
input[type="range"]::-webkit-slider-thumb { appearance: none; width: 11px; height: 9px; background: linear-gradient(#fff 20%, #bfc0c6); border: 1px solid #b5b5bd; clip-path: polygon(0 0, 100% 0, 100% 50%, 50% 100%, 0 50%); }
.opr { width: 70px; margin-left: 10px; }
.end { width: 80px; margin-left: auto; margin-right: 4px; }
.g2 { height: 104px; }
.g3 { height: 40px; }
.g4 { height: 129px; }
.last { flex: 1; border-bottom: 0; border-radius: 3px 3px 0 0; }
.lower { height: 203px; margin: 0 3px 2px 4px; display: flex; flex-direction: column; }
.well { flex: 1; margin: 3px 1px 3px 3px; border: 1px solid #d5d6dc; background: #ecedf0; }
.welltools { display: flex; justify-content: flex-end; border-bottom: 1px solid #d9dae0; }
.welltools button { width: 26px; height: 18px; display: grid; place-items: center; border-left: 1px solid #dcdde2; }
.right .btabs { margin-left: 3px; }

/* popup menus */
.popup { position: absolute; background: #fafbfd; border: 1px solid #8d8f99; box-shadow: 2px 2px 2px rgba(0, 0, 0, .45); display: grid; padding: 1px; }
.popup button { text-align: left; padding: 0 0 0 26px; border: 1px solid transparent; }
.popup .hot { background: linear-gradient(#e3e6fb, #cfd5f6); border-color: #c3caea; }
.from { left: 119px; top: 82px; width: 111px; height: 24px; }
.from .hot { display: flex; align-items: center; padding-left: 25px; }
.from svg { width: 4px; height: 6px; margin-left: 8px; color: #111; }
.list { left: 231px; top: 83px; width: 163px; height: 189px; }

/* save dialog */
.dialog { position: absolute; left: 435px; top: 223px; width: 696px; height: 463px; display: flex; flex-direction: column; background: #fafdff; border: 1px solid #1f4561; color: #111; overflow: hidden; }
.dtitle { display: flex; align-items: center; gap: 4px; height: 24px; padding: 0 8px 0 7px; }
.dtitle button { margin-left: auto; }
.dnav { display: flex; align-items: center; height: 37px; padding: 0 11px; }
.arrows { display: flex; align-items: center; gap: 12px; width: 80px; }
.addr { flex: 1; display: flex; align-items: center; height: 26px; border: 1px solid #d9dadd; padding-left: 3px; gap: 6px; }
.addr i { width: 218px; height: 21px; background: linear-gradient(90deg, #d2d3d4, #e4e5e6 15%, #d6d7d8 35%, #dfe0e1 55%, #d3d4d5 70%, #e6e7e8); }
.ddown { margin-left: auto; }
.addr button { width: 28px; height: 24px; border-left: 1px solid #d9dadd; display: grid; place-items: center; }
.search { display: flex; align-items: center; gap: 10px; width: 174px; height: 26px; margin-left: 11px; padding-left: 13px; border: 1px solid #d9dadd; }
.search input { flex: 1; min-width: 0; }
.search input::placeholder { color: #666; opacity: 1; }
.dtools { display: flex; align-items: center; height: 27px; padding: 0 13px 0 15px; background: #f4f5f8; border-bottom: 1px solid #e3e4e8; color: #1f2a5a; }
.dtools button { display: flex; align-items: center; gap: 6px; }
.dtools .caret { color: #1a1f4a; }
.dtools .nf { margin-left: 24px; }
.dtools .view { margin-left: auto; gap: 7px; }
.dtools .help { justify-content: center; width: 14px; height: 14px; margin-left: 25px; border-radius: 50%; background: #1c5fc4; color: #fff; font-weight: 700; }
.dmain { flex: 1; display: flex; min-height: 0; overflow: hidden; }
.side { width: 120px; padding-top: 13px; overflow: hidden; }
.quick { display: grid; height: 186px; grid-auto-rows: 1fr; }
.side li { display: flex; align-items: center; padding-left: 27px; gap: 4px; min-height: 20px; }
.side li svg { width: 14px; height: 14px; }
.side .top { padding-left: 20px; }
.quick .top { padding-left: 22px; }
.quick .top svg { width: 12px; }
.side .tack { width: 10px; height: 10px; margin: 0 3px 0 auto; }
.places { padding-top: 7px; }
.places .gap { margin-top: 8px; }
.sscroll { width: 13px; background: #f0f0f0; display: flex; flex-direction: column; align-items: center; padding: 5px 0 3px; }
.sscroll i { width: 13px; height: 140px; margin: 3px 0 auto; background: #cdcdcd; }
.files { flex: 1; position: relative; padding: 0 27px 0 17px; }
.sort { position: absolute; left: 123px; top: 1px; }
table { width: 100%; border-collapse: separate; border-spacing: 0; table-layout: fixed; }
.c2 { width: 124px; } .c3 { width: 103px; } .c4 { width: 69px; }
th { height: 22px; font-weight: 400; text-align: left; padding: 0 0 0 5px; color: #4c5a78; border-right: 1px solid #e4e6ea; }
th:first-child, td:first-child { padding-left: 3px; }
thead::after { content: ""; display: block; height: 4px; }
td { height: 19px; padding: 0 0 0 5px; background: #cce8ff; border: solid #99d1ff; border-width: 1px 0; color: #5d6878; white-space: nowrap; }
td:first-child { color: #111; border-left-width: 1px; }
td:last-child { border-right-width: 1px; }
td svg { display: inline-block; vertical-align: middle; margin: 0 5px 0 1px; }
td.num { text-align: right; padding-right: 5px; }
.dfoot { background: #f0f0f0; padding: 9px 4px 0 0; height: 101px; }
.field { display: flex; align-items: center; height: 22px; }
.field label { width: 104px; text-align: right; margin-right: 4px; }
.fbox { flex: 1; height: 20px; display: flex; align-items: center; border: 1px solid #82858c; background: #fafdff; padding: 0 3px; }
.fbox input, .fbox select { flex: 1; }
.grey { background: #e1e1e1; border-color: #adadad; padding-left: 2px; }
.acts { display: flex; align-items: center; gap: 11px; padding: 16px 11px 0; }
.hide { display: flex; align-items: center; gap: 7px; margin-right: auto; }
.btn { width: 75px; height: 22px; border: 1px solid #adadad; background: #e1e1e1; }
.def { border: 2px solid #2a6fe0; }
.grip { position: absolute; right: 3px; bottom: 2px; }
.notes { position: absolute; left: -1px; top: -2px; pointer-events: none; }
```
